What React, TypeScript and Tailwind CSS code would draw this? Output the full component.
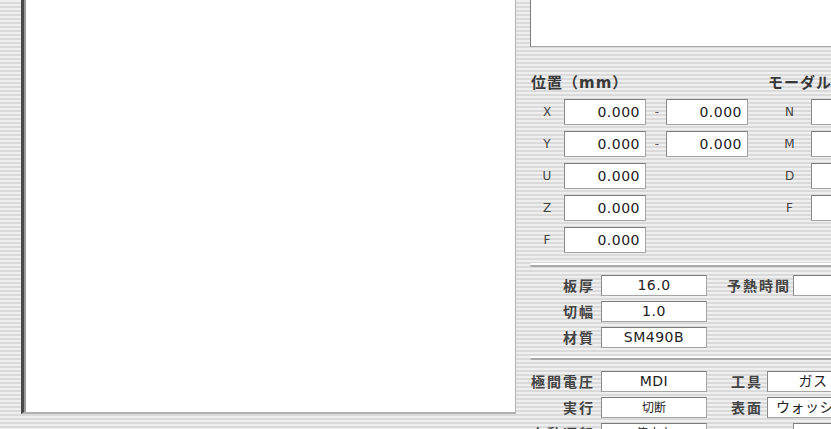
import React from 'react';

const stripes =
  'bg-[repeating-linear-gradient(180deg,#efefef_0px,#efefef_2px,#dadada_2px,#dadada_4px)]';

const fieldBox =
  'bg-white border border-[#a4a4a4] border-t-[#7c7c7c] border-l-[#8a8a8a] flex items-center';

type PosRow = { axis: string; a: string; b?: string };

const posRows: PosRow[] = [
  { axis: 'X', a: '0.000', b: '0.000' },
  { axis: 'Y', a: '0.000', b: '0.000' },
  { axis: 'U', a: '0.000' },
  { axis: 'Z', a: '0.000' },
  { axis: 'F', a: '0.000' },
];

const modalRows = ['N', 'M', 'D', 'F'];

const Groove = () => (
  <div className="h-[4px] w-full rounded-l-full border-t-2 border-white border-b-2 border-b-[#a9a9a9]" />
);

const NumField = ({ value }: { value: string }) => (
  <div className={`${fieldBox} h-[26px] w-[82px] justify-end pr-[5px]`}>
    <span className="text-[14px] tracking-[0.5px] text-[#222]">{value}</span>
  </div>
);

const Label = ({ children, width }: { children?: React.ReactNode; width: string }) => (
  <div
    className={`${width} shrink-0 whitespace-nowrap text-right text-[14px] font-bold tracking-[2px] text-[#444] leading-none`}
  >
    {children}
  </div>
);

const ValueField = ({
  value,
  width = 'w-[106px]',
  small = false,
  left = false,
}: {
  value?: string;
  width?: string;
  small?: boolean;
  left?: boolean;
}) => (
  <div
    className={`${fieldBox} ${width} h-[21px] shrink-0 overflow-hidden ${left ? 'justify-start pl-[8px]' : 'justify-center'}`}
  >
    <span
      className={
        small
          ? 'whitespace-nowrap text-[12px] text-[#222]'
          : 'whitespace-nowrap text-[14px] tracking-[0.5px] text-[#222]'
      }
    >
      {value}
    </span>
  </div>
);

const App = () => {
  return (
    <div
      className={`w-[831px] h-[429px] overflow-hidden flex ${stripes} font-['DejaVu_Sans','Noto_Sans_CJK_JP',sans-serif]`}
    >
      {/* main drawing area */}
      <div className="ml-[21px] w-[495px] h-[414px] shrink-0 bg-white border-l-[3px] border-l-[#4a4a4a] border-r border-r-[#b4b4b4] border-b-2 border-b-[#b0b0b0] shadow-[inset_2px_0_0_#9a9a9a]" />

      {/* side panel */}
      <div className="ml-[14px] w-[420px] shrink-0 flex flex-col">
        <div className="h-[47px] shrink-0 bg-white border-l border-l-[#7c7c7c] border-b border-b-[#a8a8a8]" />

        <div className="flex mt-[27px]">
          {/* position */}
          <div className="w-[238px] shrink-0">
            <div className="h-[18px] pl-[1px] text-[15px] font-bold tracking-[1px] text-[#383838] leading-[18px]">
              位置（mm）
            </div>
            <div className="mt-[7px] flex flex-col gap-[6px]">
              {posRows.map(r => (
                <div key={r.axis} className="flex items-center h-[26px]">
                  <div className="w-[34px] text-center text-[12px] text-[#444]">{r.axis}</div>
                  <NumField value={r.a} />
                  {r.b && (
                    <>
                      <div className="w-[20px] pl-[2px] text-center text-[12px] text-[#555]">-</div>
                      <NumField value={r.b} />
                    </>
                  )}
                </div>
              ))}
            </div>
          </div>

          {/* modal */}
          <div className="flex-1">
            <div className="h-[18px] text-[15px] font-bold tracking-[1px] text-[#383838] leading-[18px]">
              モーダル
            </div>
            <div className="mt-[7px] flex flex-col gap-[6px]">
              {modalRows.map(m => (
                <div key={m} className="flex items-center h-[26px]">
                  <div className="w-[43px] text-center text-[12px] text-[#444]">{m}</div>
                  <div className={`${fieldBox} h-[26px] w-[82px]`} />
                </div>
              ))}
            </div>
          </div>
        </div>

        <div className="mt-[10px]">
          <Groove />
        </div>

        <div className="mt-[8px] flex flex-col gap-[5px]">
          <div className="flex items-center gap-[6px]">
            <Label width="w-[65px]">板厚</Label>
            <ValueField value="16.0" />
            <div className="ml-[14px] flex items-center gap-[3px]">
              <Label width="w-[63px]">予熱時間</Label>
              <ValueField width="w-[90px]" />
            </div>
          </div>
          <div className="flex items-center gap-[6px]">
            <Label width="w-[65px]">切幅</Label>
            <ValueField value="1.0" />
          </div>
          <div className="flex items-center gap-[6px]">
            <Label width="w-[65px]">材質</Label>
            <ValueField value="SM490B" />
          </div>
        </div>

        <div className="mt-[8px]">
          <Groove />
        </div>

        <div className="mt-[11px] flex flex-col gap-[5px]">
          <div className="flex items-center gap-[6px]">
            <Label width="w-[65px]">極間電圧</Label>
            <ValueField value="MDI" />
            <div className="ml-[15px] flex items-center gap-[4px]">
              <Label width="w-[35px]">工具</Label>
              <ValueField value="ガス" width="w-[92px]" />
            </div>
          </div>
          <div className="flex items-center gap-[6px]">
            <Label width="w-[65px]">実行</Label>
            <ValueField value="切断" small />
            <div className="ml-[15px] flex items-center gap-[4px]">
              <Label width="w-[35px]">表面</Label>
              <ValueField value="ウォッシャー" width="w-[92px]" left />
            </div>
          </div>
          <div className="flex items-center gap-[6px]">
            <Label width="w-[65px]">自動運転</Label>
            <ValueField value="停止中" small />
            <div className="ml-[14px] flex items-center gap-[3px]">
              <Label width="w-[63px]" />
              <ValueField width="w-[90px]" />
            </div>
          </div>
        </div>
      </div>
    </div>
  );
};

export default App;
